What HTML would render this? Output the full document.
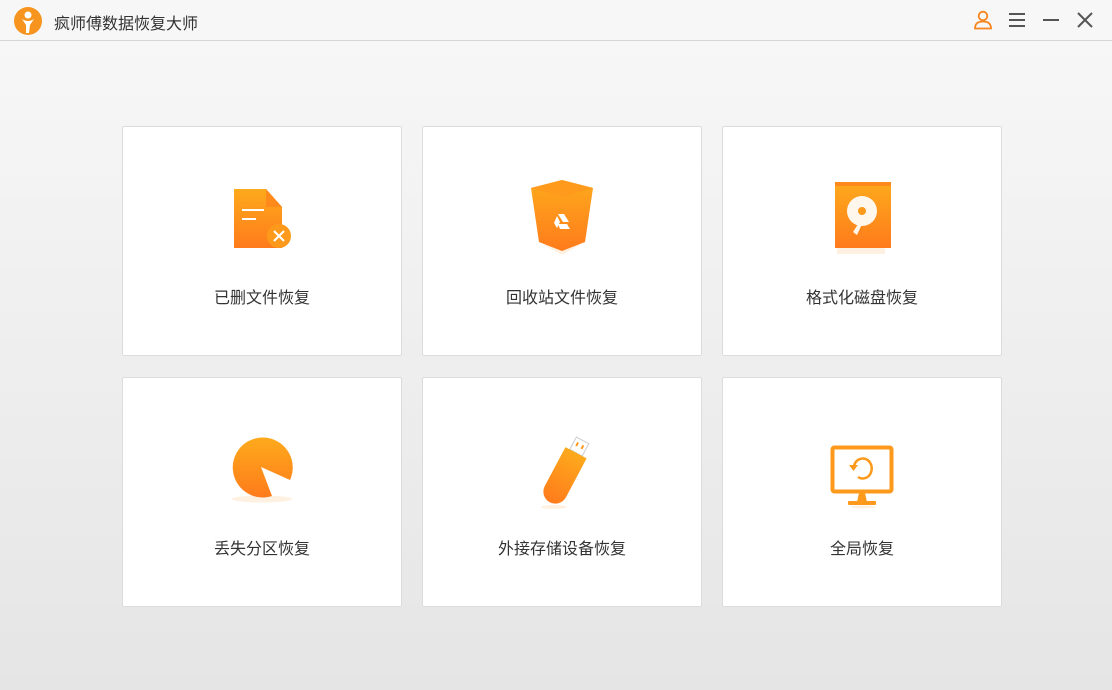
<!DOCTYPE html>
<html><head><meta charset="utf-8"><style>
*{margin:0;padding:0;box-sizing:border-box}
body{width:1112px;height:690px;overflow:hidden;font-family:"Liberation Sans","Noto Sans CJK SC",sans-serif;background:linear-gradient(#f8f8f8,#e5e5e5);position:relative}
.top{position:absolute;left:0;top:0;width:1112px;height:41px;background:#f7f7f7;border-bottom:1px solid #d6d6d6}
.title{position:absolute;left:54px;top:10px;font-size:16px;color:#333}
.card{position:absolute;width:280px;height:230px;background:#fff;border:1px solid #dcdcdc;border-radius:2px}
.card .lbl{position:absolute;left:0;right:0;top:157px;text-align:center;font-size:16px;color:#333}
.card svg{position:absolute}
</style></head><body>
<div class="top">
<svg style="position:absolute;left:13px;top:6px" width="30" height="30" viewBox="0 0 30 30"><circle cx="15" cy="15" r="14" fill="#f7941d"/><circle cx="15" cy="9" r="3.5" fill="#fff"/><path d="M9 13 Q15 17 21 13 L17 19 L16 27 L13 27 L13 19 Z" fill="#fff"/></svg>
<div class="title">疯师傅数据恢复大师</div>
<svg style="position:absolute;left:973px;top:10px" width="20" height="20" viewBox="0 0 20 20" fill="none" stroke="#f7841d" stroke-width="1.8"><circle cx="10" cy="6" r="4.3"/><path d="M2 18.5 Q2 11.5 10 11.5 Q18 11.5 18 18.5 Z"/></svg>
<svg style="position:absolute;left:1008px;top:11px" width="18" height="18" viewBox="0 0 18 18" stroke="#555" stroke-width="2"><path d="M1 3h16M1 9h16M1 15h16"/></svg>
<svg style="position:absolute;left:1042px;top:11px" width="18" height="18" viewBox="0 0 18 18" stroke="#555" stroke-width="2"><path d="M1 9h16"/></svg>
<svg style="position:absolute;left:1076px;top:11px" width="18" height="18" viewBox="0 0 18 18" stroke="#555" stroke-width="2"><path d="M2 2l14 14M16 2L2 16"/></svg>
</div>
<svg width="0" height="0" style="position:absolute"><defs><linearGradient id="g" x1="0" y1="0" x2="0" y2="1"><stop offset="0" stop-color="#fdaa1c"/><stop offset="1" stop-color="#ff7b1c"/></linearGradient></defs></svg>

<div class="card" style="left:122px;top:126px">
<svg style="left:110px;top:61px" width="60" height="62" viewBox="0 0 60 62"><path d="M1 1H33L49 19V60H1Z" fill="url(#g)"/><path d="M33 1V19H49Z" fill="#ff8a1c"/><path d="M9 22h22M9 31h14" stroke="#fff" stroke-width="2"/><circle cx="46" cy="48" r="12" fill="#fd9a1c"/><path d="M41 43l10 10M51 43l-10 10" stroke="#fff" stroke-width="2"/></svg>
<div class="lbl">已删文件恢复</div></div>

<div class="card" style="left:422px;top:126px">
<svg style="left:107px;top:52px" width="64" height="80" viewBox="0 0 64 80"><path d="M14 66L32 58L50 66L32 76Z" fill="#fff1e2"/><path d="M1 9L32 1L63 9L55 63L32 72L9 63Z" fill="url(#g)"/><path d="M1 9L32 1L63 9L32 18Z" fill="#ff9a1c"/><path d="M28 35h6l5 8h-6zM27 37l-3 7 3 5 3-6zM30 50h10l-3-5h-9z" fill="#fff"/></svg>
<div class="lbl">回收站文件恢复</div></div>

<div class="card" style="left:722px;top:126px">
<svg style="left:110px;top:54px" width="60" height="76" viewBox="0 0 60 76"><path d="M4 67h48v6H4z" fill="#fff1e2"/><path d="M2 1H58V67H2Z" fill="url(#g)"/><rect x="2" y="1" width="56" height="4" fill="#ff8a1c"/><ellipse cx="29" cy="30" rx="15" ry="15" fill="#fff6ec"/><circle cx="29" cy="30" r="4" fill="#fd9a1c"/><path d="M27 40l-7 11 4 3 6-13z" fill="#fff6ec"/></svg>
<div class="lbl">格式化磁盘恢复</div></div>

<div class="card" style="left:122px;top:377px">
<svg style="left:108px;top:57px" width="66" height="72" viewBox="0 0 66 72"><ellipse cx="31" cy="64" rx="30" ry="3.5" fill="#fff1e2"/><path d="M30 32L59 45A30 30 0 1 0 41 61Z" fill="url(#g)"/></svg>
<div class="lbl">丢失分区恢复</div></div>

<div class="card" style="left:422px;top:377px">
<svg style="left:112px;top:55px" width="56" height="80" viewBox="0 0 56 80"><ellipse cx="19" cy="74" rx="13" ry="2" fill="#fff1e2"/><g transform="rotate(28 28 40)"><rect x="23" y="2" width="14" height="14" fill="#fff" stroke="#ccc"/><rect x="26" y="6" width="2" height="4" fill="#fd9a1c"/><rect x="32" y="6" width="2" height="4" fill="#fd9a1c"/><path d="M18 16h24v44a12 12 0 0 1-24 0z" fill="url(#g)"/></g></svg>
<div class="lbl">外接存储设备恢复</div></div>

<div class="card" style="left:722px;top:377px">
<svg style="left:107px;top:67px" width="66" height="66" viewBox="0 0 66 66"><ellipse cx="33" cy="62" rx="12" ry="1.5" fill="#fff1e2"/><rect x="2.5" y="2.5" width="59" height="44" rx="2" fill="none" stroke="#fd9a1c" stroke-width="4"/><path d="M29 48h6l2 9h-10z" fill="#fd9a1c"/><rect x="18" y="56" width="28" height="4" rx="1" fill="#fd9a1c"/><path d="M24 21A9 10 0 1 1 28 32" fill="none" stroke="#fd9a1c" stroke-width="2.5"/><path d="M19 20h9l-4.5 6z" fill="#fd9a1c"/></svg>
<div class="lbl">全局恢复</div></div>
</body></html>
